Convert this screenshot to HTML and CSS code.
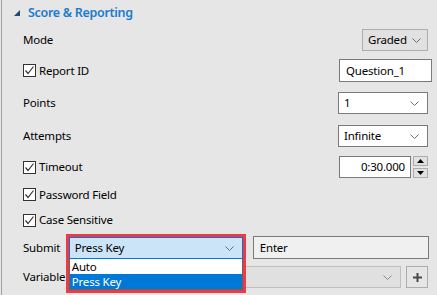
FILE: index.html
```html
<!DOCTYPE html>
<html lang="en">
  <head>
    <meta charset="UTF-8">
    <title>Score &amp; Reporting</title>
    <link rel="stylesheet" href="styles.css">
  </head>
  <body>
    <div class="panel">
      <div class="head">
        <svg class="caret" width="6" height="6" viewBox="0 0 6 6"><polygon points="6,0 6,6 0,6" fill="#1f4a7a"/></svg>
        <span>Score &amp; Reporting</span>
      </div>

      <div class="row r-mode">
        <span class="label">Mode</span>
        <div class="select flat w-graded"><span>Graded</span><svg class="chev" width="9" height="5" viewBox="0 0 9 5"><polyline points="0.5,0.5 4.5,4.5 8.5,0.5" fill="none" stroke="#6d6d6d"/></svg></div>
      </div>

      <div class="row r-id">
        <label class="check"><span class="box"><svg width="11" height="11" viewBox="0 0 11 11"><polyline points="1.5,5.5 4,8.5 9.5,1.5" fill="none" stroke="#333" stroke-width="1.2"/></svg></span>Report ID</label>
        <div class="input w-qid">Question_1</div>
      </div>

      <div class="row r-points">
        <span class="label">Points</span>
        <div class="select w-std"><span>1</span><svg class="chev" width="9" height="5" viewBox="0 0 9 5"><polyline points="0.5,0.5 4.5,4.5 8.5,0.5" fill="none" stroke="#6d6d6d"/></svg></div>
      </div>

      <div class="row r-attempts">
        <span class="label">Attempts</span>
        <div class="select w-std"><span>Infinite</span><svg class="chev" width="9" height="5" viewBox="0 0 9 5"><polyline points="0.5,0.5 4.5,4.5 8.5,0.5" fill="none" stroke="#6d6d6d"/></svg></div>
      </div>

      <div class="row r-timeout">
        <label class="check"><span class="box"><svg width="11" height="11" viewBox="0 0 11 11"><polyline points="1.5,5.5 4,8.5 9.5,1.5" fill="none" stroke="#333" stroke-width="1.2"/></svg></span>Timeout</label>
        <div class="spin">
          <div class="input num">0:30.000</div>
          <div class="arrows">
            <div class="arrow"><svg width="7" height="4" viewBox="0 0 7 4"><polygon points="3.5,0 7,4 0,4" fill="#000"/></svg></div>
            <div class="arrow"><svg width="7" height="4" viewBox="0 0 7 4"><polygon points="0,0 7,0 3.5,4" fill="#000"/></svg></div>
          </div>
        </div>
      </div>

      <div class="row r-pass">
        <label class="check"><span class="box"><svg width="11" height="11" viewBox="0 0 11 11"><polyline points="1.5,5.5 4,8.5 9.5,1.5" fill="none" stroke="#333" stroke-width="1.2"/></svg></span>Password Field</label>
      </div>

      <div class="row r-case">
        <label class="check"><span class="box"><svg width="11" height="11" viewBox="0 0 11 11"><polyline points="1.5,5.5 4,8.5 9.5,1.5" fill="none" stroke="#333" stroke-width="1.2"/></svg></span>Case Sensitive</label>
      </div>

      <div class="row r-submit">
        <span class="label w-label">Submit</span>
        <div class="pick">
          <div class="select open"><span>Press Key</span><svg class="chev" width="9" height="5" viewBox="0 0 9 5"><polyline points="0.5,0.5 4.5,4.5 8.5,0.5" fill="none" stroke="#6d6d6d"/></svg></div>
          <ul class="menu">
            <li>Auto</li>
            <li class="current">Press Key</li>
          </ul>
          <div class="frame"></div>
        </div>
        <div class="input off w-key">Enter</div>
      </div>

      <div class="row r-var">
        <span class="label w-label">Variable</span>
        <div class="select off w-var"><span></span><svg class="chev" width="9" height="5" viewBox="0 0 9 5"><polyline points="0.5,0.5 4.5,4.5 8.5,0.5" fill="none" stroke="#8a8a8a"/></svg></div>
        <div class="add"><svg width="9" height="9" viewBox="0 0 9 9"><path d="M3.5 0h2v3.5h3.5v2h-3.5v3.5h-2v-3.5h-3.5v-2h3.5z" fill="#4a4a4a"/></svg></div>
      </div>
    </div>
  </body>
</html>
```

FILE: styles.css
```css
body, div, ul, li { margin: 0; padding: 0; }
ul { list-style-type: none; }
body { background: #e6e6e6; font: 11.5px/16px "Segoe UI", "Noto Sans", sans-serif; letter-spacing: -0.2px; color: #000; }

.panel { width: 436px; height: 295px; margin-left: 1px; border-left: 1px solid #a3a3a3; box-sizing: border-box; padding: 0 9px 0 21px; }

.head { height: 25px; display: flex; align-items: center; margin-left: -10px; color: #1a7ad2; font-weight: 600; font-size: 12.5px; letter-spacing: -0.3px; }
.head .caret { margin: 1px 8px 0 1px; }

.row { display: flex; align-items: center; justify-content: space-between; }
.r-mode { height: 30px; }
.r-id { height: 31px; }
.r-points { height: 33px; }
.r-attempts { height: 33px; }
.r-timeout { height: 30px; }
.r-pass { height: 25px; }
.r-case { height: 26px; }
.r-submit { height: 29px; justify-content: flex-start; }
.r-var { height: 30px; justify-content: flex-start; }

.label { white-space: nowrap; }
.w-label { width: 46px; }

.check { display: flex; align-items: center; white-space: nowrap; }
.check .box { width: 11px; height: 11px; border: 1px solid #333; background: #fff; margin-right: 3px; display: flex; }

.select { height: 22px; box-sizing: border-box; border: 1px solid #7a7a7a; background: #fff; display: flex; align-items: center; justify-content: space-between; padding: 0 8px 0 5px; }
.select.flat { background: #e1e1e1; border-color: #adadad; padding-right: 6px; }
.select.open { width: 174px; background: #cce4f7; border-color: #0078d7; }
.select.off { background: #e0e0e0; border-color: #bfbfbf; }
.chev { margin-top: 1px; }

.w-graded { width: 66px; }
.w-std { width: 90px; }
.w-var { width: 333px; }

.input { height: 23px; box-sizing: border-box; border: 1px solid #7a7a7a; background: #fff; padding: 0 6px; display: flex; align-items: center; }
.w-qid { width: 93px; margin-right: -4px; }
.input.off { background: #f0f0f0; }
.w-key { width: 177px; margin-left: 10px; margin-right: -1px; }

.spin { display: flex; gap: 2px; height: 22px; }
.spin .num { width: 72px; height: 22px; justify-content: flex-end; padding-right: 5px; }
.arrows { display: flex; flex-direction: column; gap: 2px; }
.arrow { width: 15px; height: 10px; box-sizing: border-box; border: 1px solid #adadad; background: #e1e1e1; display: flex; align-items: center; justify-content: center; }

.pick { position: relative; }
.menu { position: absolute; top: 22px; left: 0; width: 174px; background: #fff; border: 1px solid #646464; border-top: 0; box-sizing: border-box; }
.menu li { height: 15px; line-height: 15px; padding-left: 2px; }
.menu li.current { background: #0078d7; color: #fff; }
.frame { position: absolute; top: -3px; left: -3px; width: 180px; height: 59px; box-sizing: border-box; border: 3px solid #ee3a43; }

.add { width: 22px; height: 22px; box-sizing: border-box; border: 1px solid #adadad; background: #e6e6e6; margin-left: 5px; display: flex; align-items: center; justify-content: center; }
```
